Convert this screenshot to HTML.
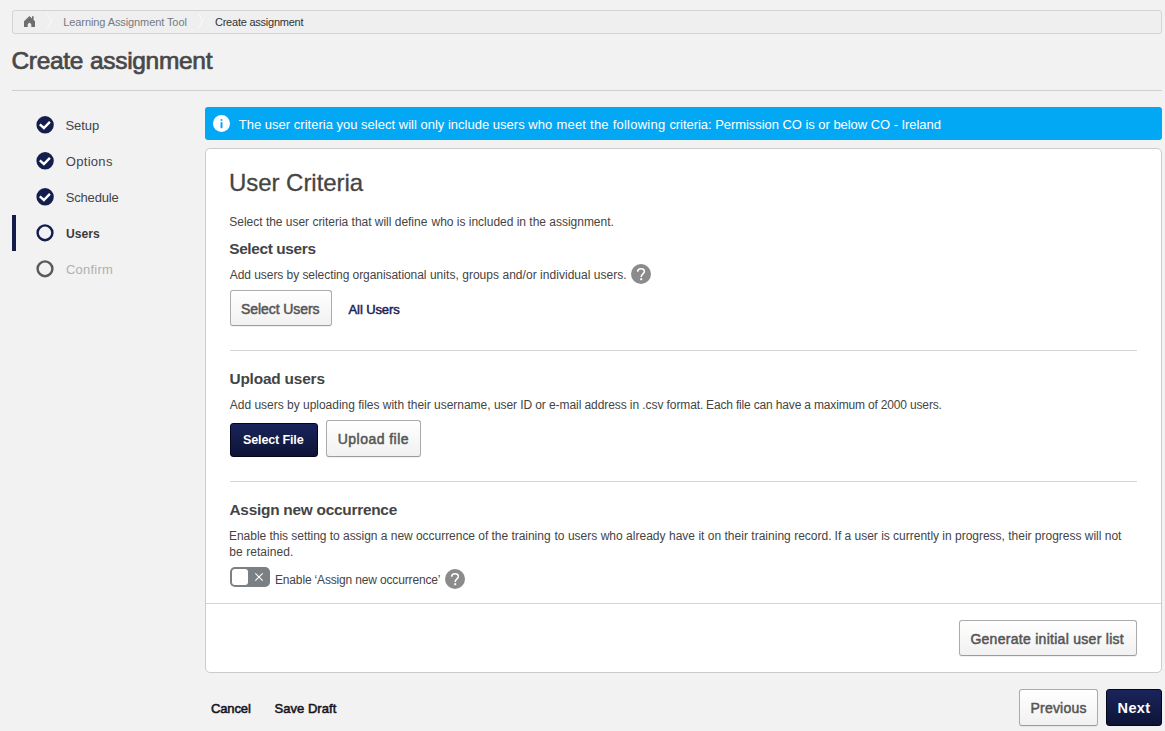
<!DOCTYPE html>
<html lang="en">
<head>
<meta charset="utf-8">
<title>Create assignment</title>
<style>
html,body{margin:0;padding:0;}
body{width:1165px;height:731px;position:relative;overflow:hidden;background:#f2f2f2;font-family:"Liberation Sans",sans-serif;}
*{box-sizing:border-box;}
.t{position:absolute;white-space:nowrap;line-height:1;font-family:"Liberation Sans",sans-serif;}
.abs{position:absolute;}
.bc{position:absolute;left:12px;top:10px;width:1150px;height:24px;border:1px solid #d4d4d4;border-radius:3px;background:#efefef;}
.rule{position:absolute;height:1px;background:#cfcfcf;}
.bar{position:absolute;left:12px;top:215px;width:4px;height:36px;background:#131c4b;}
.banner{position:absolute;left:205px;top:107px;width:957px;height:33px;background:#03a8f5;border-radius:3px;}
.panel{position:absolute;left:205px;top:148px;width:957px;height:525px;background:#fff;border:1px solid #cbcbcb;border-radius:5px;}
.btn{position:absolute;border:1px solid #ababab;border-bottom-color:#9c9c9c;border-radius:3px;background:linear-gradient(#ffffff,#f1f1f1);box-shadow:0 1px 1px rgba(0,0,0,.06);}
.btn.pri{border:1px solid #04061a;background:linear-gradient(#1a245b,#0e1436);box-shadow:none;}
.toggle{position:absolute;left:230px;top:567px;width:40px;height:20px;border-radius:5px;background:#7b8084;}
.knob{position:absolute;left:2px;top:2px;width:16px;height:16px;border-radius:3px;background:#fff;}
svg{position:absolute;overflow:visible;}

</style>
</head>
<body>
<nav class="bc" aria-label="Breadcrumb"></nav>
<svg style="left:24px;top:16px" width="11" height="11" viewBox="0 0 11 11"><path fill="#6e6e6e" d="M5.5 0 L0 5.2 V11 H3.7 V8.2 L5.5 6.6 L7.3 8.2 V11 H11 V5.2 L9.6 3.9 V0.3 H8 V2.4 Z"/></svg>
<svg style="left:46px;top:13px" width="7" height="16" viewBox="0 0 7 16"><path d="M1 0.5 L5.7 8 L1 15.5" fill="none" stroke="#fff" stroke-width="1" opacity=".65"/></svg>
<svg style="left:197px;top:13px" width="7" height="16" viewBox="0 0 7 16"><path d="M1 0.5 L5.7 8 L1 15.5" fill="none" stroke="#fff" stroke-width="1" opacity=".65"/></svg>
<span class="t" id="bc1" style="left:63.29px;top:17.00px;font-size:11px;font-weight:400;color:#737a83;letter-spacing:-0.096px;">Learning Assignment Tool</span>
<span class="t" id="bc2" style="left:214.98px;top:17.00px;font-size:11px;font-weight:400;color:#333;letter-spacing:-0.234px;">Create assignment</span>
<h1 style="margin:0"><span class="t" id="title" style="left:11.48px;top:49.00px;font-size:24.5px;font-weight:400;color:#484848;letter-spacing:-0.308px;-webkit-text-stroke:0.7px #484848;word-spacing:0.3px;">Create assignment</span></h1>
<div class="rule" style="left:12px;top:90px;width:1150px"></div>

<div class="bar"></div>
<svg style="left:36px;top:116px" width="18" height="18" viewBox="0 0 18 18"><circle cx="9.1" cy="8.8" r="8.7" fill="#141e4d"/><path d="M3.8 8.3 L7.9 12.0 L13.9 5.8" fill="none" stroke="#fff" stroke-width="2.4"/></svg>
<svg style="left:36px;top:152px" width="18" height="18" viewBox="0 0 18 18"><circle cx="9.1" cy="8.8" r="8.7" fill="#141e4d"/><path d="M3.8 8.3 L7.9 12.0 L13.9 5.8" fill="none" stroke="#fff" stroke-width="2.4"/></svg>
<svg style="left:36px;top:188px" width="18" height="18" viewBox="0 0 18 18"><circle cx="9.1" cy="8.8" r="8.7" fill="#141e4d"/><path d="M3.8 8.3 L7.9 12.0 L13.9 5.8" fill="none" stroke="#fff" stroke-width="2.4"/></svg>
<svg style="left:36px;top:224px" width="18" height="18" viewBox="0 0 18 18"><circle cx="9" cy="8.75" r="7.4" fill="none" stroke="#141e4d" stroke-width="2.45"/></svg>
<svg style="left:36px;top:260px" width="18" height="18" viewBox="0 0 18 18"><circle cx="9" cy="8.75" r="7.4" fill="none" stroke="#5a5a5a" stroke-width="2.45"/></svg>
<span class="t" id="s1" style="left:65.44px;top:119.00px;font-size:13px;font-weight:400;color:#42444c;letter-spacing:-0.066px;">Setup</span>
<span class="t" id="s2" style="left:65.85px;top:155.00px;font-size:13px;font-weight:400;color:#42444c;letter-spacing:0.291px;">Options</span>
<span class="t" id="s3" style="left:65.77px;top:191.00px;font-size:13px;font-weight:400;color:#42444c;letter-spacing:-0.185px;">Schedule</span>
<span class="t" id="s4" style="left:65.67px;top:227.00px;font-size:13.5px;font-weight:700;color:#3b3b40;letter-spacing:-0.001px;transform:scaleX(0.9);transform-origin:0 50%;">Users</span>
<span class="t" id="s5" style="left:66.01px;top:263.00px;font-size:13px;font-weight:400;color:#b0b0b0;letter-spacing:0.227px;">Confirm</span>

<div class="banner"></div>
<svg style="left:213px;top:115px" width="17" height="17" viewBox="0 0 17 17"><circle cx="8.5" cy="8.5" r="8.5" fill="#fff"/><rect x="7.5" y="3.9" width="2" height="2.1" rx="1" fill="#03a8f5"/><rect x="7.5" y="7.1" width="2" height="6.1" rx="0.8" fill="#03a8f5"/></svg>
<p style="margin:0"><span class="t" id="bana" style="left:238.82px;top:117.50px;font-size:13px;font-weight:400;color:#fff;letter-spacing:0.009px;">The user criteria you select will only include users who</span> <span class="t" id="banb" style="left:556.39px;top:117.50px;font-size:13px;font-weight:400;color:#fff;letter-spacing:0.235px;">meet the following</span> <span class="t" id="banc" style="left:669.39px;top:117.50px;font-size:13px;font-weight:400;color:#fff;letter-spacing:-0.047px;">criteria: Permission CO is or below CO - Ireland</span></p>

<main class="panel"></main>
<h2 style="margin:0"><span class="t" id="h1" style="left:229.04px;top:171.00px;font-size:24px;font-weight:400;color:#454545;letter-spacing:-0.050px;-webkit-text-stroke:0.3px #454545;">User Criteria</span></h2>
<p style="margin:0"><span class="t" id="d1a" style="left:229.34px;top:216.00px;font-size:12px;font-weight:400;color:#444;letter-spacing:-0.019px;">Select the user criteria that will define</span> <span class="t" id="d1b" style="left:431.57px;top:216.00px;font-size:12px;font-weight:400;color:#444;letter-spacing:-0.015px;">who is included in the assignment.</span></p>
<h3 style="margin:0"><span class="t" id="h2" style="left:229.22px;top:241.00px;font-size:15.4px;font-weight:700;color:#444;letter-spacing:-0.359px;">Select users</span></h3>
<p style="margin:0"><span class="t" id="d2a" style="left:229.79px;top:269.00px;font-size:12px;font-weight:400;color:#444;letter-spacing:-0.057px;">Add users by selecting organisational</span> <span class="t" id="d2b" style="left:429.90px;top:269.00px;font-size:12px;font-weight:400;color:#444;letter-spacing:0.037px;">units, groups and/or individual users.</span></p>
<svg style="left:631.1px;top:263.8px" width="20" height="20" viewBox="0 0 20 20"><circle cx="10" cy="10" r="10" fill="#8b8b8b"/><path d="M6.7 7.7 C6.7 5.7 8.2 4.8 10 4.8 C11.9 4.8 13.4 5.8 13.4 7.5 C13.4 9.8 10.2 10.1 10.2 12.9" fill="none" stroke="#fff" stroke-width="1.5"/><rect x="9.2" y="14.2" width="2" height="2" fill="#fff"/></svg>
<div class="btn" style="left:230px;top:290px;width:102px;height:36px"></div>
<span class="t" id="b1" style="left:240.99px;top:302.00px;font-size:14px;font-weight:400;color:#555;letter-spacing:-0.069px;-webkit-text-stroke:0.5px #555;">Select Users</span>
<span class="t" id="all" style="left:348.55px;top:303.00px;font-size:13px;font-weight:400;color:#1a2456;letter-spacing:-0.112px;-webkit-text-stroke:0.5px #1a2456;">All Users</span>
<div class="rule" style="left:230px;top:350px;width:907px;background:#d5d5d5"></div>

<h3 style="margin:0"><span class="t" id="h3" style="left:229.46px;top:371.00px;font-size:15.4px;font-weight:700;color:#444;letter-spacing:-0.180px;">Upload users</span></h3>
<p style="margin:0"><span class="t" id="d3a" style="left:229.79px;top:399.00px;font-size:12px;font-weight:400;color:#444;letter-spacing:-0.014px;">Add users by uploading files with their username,</span> <span class="t" id="d3b" style="left:493.90px;top:399.00px;font-size:12px;font-weight:400;color:#444;letter-spacing:-0.080px;">user ID or e-mail address in .csv format.</span> <span class="t" id="d3c" style="left:706.07px;top:399.00px;font-size:12px;font-weight:400;color:#444;letter-spacing:-0.166px;">Each file can have a maximum of 2000 users.</span></p>
<div class="btn pri" style="left:230px;top:423px;width:88px;height:34px"></div>
<span class="t" id="b2" style="left:242.97px;top:434.00px;font-size:12.6px;font-weight:700;color:#fff;letter-spacing:-0.158px;">Select File</span>
<div class="btn" style="left:326px;top:420px;width:95px;height:37px"></div>
<span class="t" id="b3" style="left:337.76px;top:432.00px;font-size:14px;font-weight:400;color:#555;letter-spacing:0.461px;-webkit-text-stroke:0.5px #555;">Upload file</span>
<div class="rule" style="left:230px;top:481px;width:907px;background:#d5d5d5"></div>

<h3 style="margin:0"><span class="t" id="h4" style="left:229.49px;top:502.00px;font-size:15.4px;font-weight:700;color:#444;letter-spacing:-0.253px;">Assign new occurrence</span></h3>
<p style="margin:0"><span class="t" id="d4aa" style="left:229.00px;top:530.00px;font-size:12px;font-weight:400;color:#444;letter-spacing:-0.032px;">Enable this setting to assign a new occurrence of the training</span> <span class="t" id="d4ab" style="left:554.50px;top:530.00px;font-size:12px;font-weight:400;color:#444;letter-spacing:0.018px;">to users who already have it on their training record.</span> <span class="t" id="d4ac" style="left:834.58px;top:530.00px;font-size:12px;font-weight:400;color:#444;letter-spacing:-0.011px;">If a user is currently in progress, their progress will not</span> <span class="t" id="d4b" style="left:229.29px;top:546.00px;font-size:12px;font-weight:400;color:#444;letter-spacing:0.067px;">be retained.</span></p>
<div class="toggle"><div class="knob"></div></div>
<svg style="left:255px;top:573px" width="8" height="8" viewBox="0 0 8 8"><path d="M0.3 0.3 L7.7 7.7 M7.7 0.3 L0.3 7.7" stroke="#fff" stroke-width="1.1" fill="none"/></svg>
<span class="t" id="tl" style="left:275.00px;top:574.00px;font-size:12px;font-weight:400;color:#444;letter-spacing:-0.161px;">Enable ‘Assign new occurrence’</span>
<svg style="left:445.1px;top:568.8px" width="20" height="20" viewBox="0 0 20 20"><circle cx="10" cy="10" r="10" fill="#8b8b8b"/><path d="M6.7 7.7 C6.7 5.7 8.2 4.8 10 4.8 C11.9 4.8 13.4 5.8 13.4 7.5 C13.4 9.8 10.2 10.1 10.2 12.9" fill="none" stroke="#fff" stroke-width="1.5"/><rect x="9.2" y="14.2" width="2" height="2" fill="#fff"/></svg>

<div class="rule" style="left:206px;top:603px;width:955px;background:#d5d5d5"></div>
<div class="btn" style="left:959px;top:620px;width:178px;height:36px"></div>
<span class="t" id="b4" style="left:970.39px;top:632.00px;font-size:14px;font-weight:400;color:#555;letter-spacing:0.282px;-webkit-text-stroke:0.5px #555;">Generate initial user list</span>

<span class="t" id="cancel" style="left:210.99px;top:702.00px;font-size:13px;font-weight:400;color:#15151f;letter-spacing:-0.128px;-webkit-text-stroke:0.55px #15151f;">Cancel</span>
<span class="t" id="save" style="left:274.44px;top:702.00px;font-size:13px;font-weight:400;color:#15151f;letter-spacing:0.049px;-webkit-text-stroke:0.55px #15151f;">Save Draft</span>
<div class="btn" style="left:1019px;top:689px;width:79px;height:37px"></div>
<span class="t" id="b5" style="left:1030.49px;top:701.00px;font-size:14px;font-weight:400;color:#555;letter-spacing:0.211px;-webkit-text-stroke:0.5px #555;">Previous</span>
<div class="btn pri" style="left:1106px;top:689px;width:56px;height:37px"></div>
<span class="t" id="b6" style="left:1117.61px;top:701.00px;font-size:14.5px;font-weight:700;color:#fff;letter-spacing:0.318px;">Next</span>

</body>
</html>
